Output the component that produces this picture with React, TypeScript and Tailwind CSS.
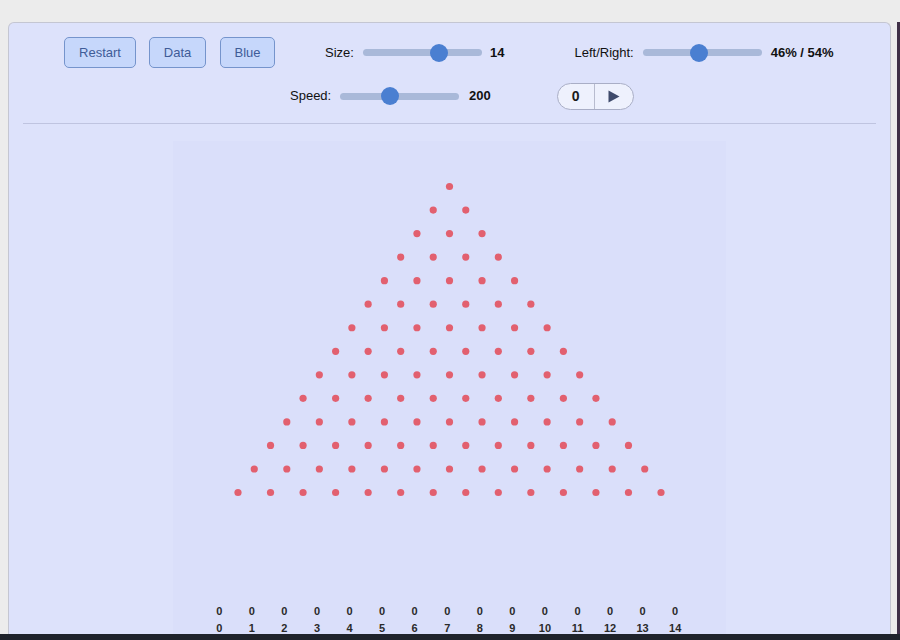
import React from "react";

const ROWS = 14;
const DX = 32.54;
const DY = 23.54;

function Slider({ pos }: { pos: number }) {
  return (
    <div className="relative w-[119px] h-[7px] rounded-full bg-[#a9b9d9]">
      <div
        className="absolute top-1/2 w-[18px] h-[18px] -mt-[9px] -ml-[9px] rounded-full bg-[#4a7fd1]"
        style={{ left: pos }}
      />
    </div>
  );
}

function Board() {
  const dots: React.ReactNode[] = [];
  for (let r = 0; r < ROWS; r++) {
    for (let c = 0; c <= r; c++) {
      const x = 276.5 + (c - r / 2) * DX;
      const y = 45.5 + r * DY;
      dots.push(<circle key={`${r}-${c}`} cx={x} cy={y} r={3.6} fill="#e2606f" />);
    }
  }
  return (
    <svg width={553} height={462} className="block">
      {dots}
    </svg>
  );
}

export default function App() {
  const nums = Array.from({ length: 15 }, (_, i) => i);
  return (
    <div
      className="w-[900px] h-[640px] bg-[#ececec] overflow-hidden flex flex-col"
      style={{ fontFamily: '"Liberation Sans", Arial, sans-serif' }}
    >
      <div className="h-[22px] shrink-0" />
      <div className="h-[612px] shrink-0 flex">
        <div className="w-[8px] shrink-0" />
        <div className="w-[883px] h-full shrink-0 rounded-t-[6px] border border-b-0 border-[#c4c6d2] bg-[#dde2fb] flex flex-col overflow-hidden">
          {/* Row 1 */}
          <div className="mt-[14px] h-[31px] flex items-center pl-[55px] text-[13px] text-[#111]">
            <button className="w-[72px] h-[31px] rounded-[5px] border border-[#7594cc] bg-[#c6d7fb] text-[#3f5c98] text-[13px]">
              Restart
            </button>
            <button className="ml-[13px] w-[57px] h-[31px] rounded-[5px] border border-[#7594cc] bg-[#c6d7fb] text-[#3f5c98] text-[13px]">
              Data
            </button>
            <button className="ml-[14px] w-[55px] h-[31px] rounded-[5px] border border-[#7594cc] bg-[#c6d7fb] text-[#3f5c98] text-[13px]">
              Blue
            </button>
            <span className="ml-[50px] w-[29px]">Size:</span>
            <div className="ml-[9px]">
              <Slider pos={76} />
            </div>
            <span className="ml-[8px] font-bold">14</span>
            <span className="ml-[70px]">Left/Right:</span>
            <div className="ml-[9px]">
              <Slider pos={56} />
            </div>
            <span className="ml-[9px] font-bold">46% / 54%</span>
          </div>
          {/* Row 2 */}
          <div className="mt-[15px] h-[26px] flex items-center pl-[281px] text-[13px] text-[#111]">
            <span className="w-[41px]">Speed:</span>
            <div className="ml-[9px]">
              <Slider pos={50} />
            </div>
            <span className="ml-[10px] font-bold">200</span>
            <div className="ml-[66px] w-[77px] h-[27px] rounded-full border border-[#a9aec6] bg-[#eef1fd] flex items-stretch overflow-hidden">
              <div className="w-[36px] flex items-center justify-center font-bold text-[14px] text-[#1a1a1a]">0</div>
              <div className="w-px bg-[#b8bccf]" />
              <div className="flex-1 flex items-center justify-center">
                <svg width="13" height="13" viewBox="0 0 13 13">
                  <path d="M1.5 0.5 L12.5 6.5 L1.5 12.5 Z" fill="#3e4a6b" />
                </svg>
              </div>
            </div>
          </div>
          {/* Divider */}
          <div className="mt-[14px] mx-[14px] h-px shrink-0 bg-[#bfc4e0]" />
          {/* Canvas */}
          <div className="mt-[17px] mx-auto w-[553px] flex-1 bg-[#dadffa]">
            <Board />
            <div className="ml-[30px] flex h-[17px] items-center text-[11px] font-bold text-[#2a2a2a]">
              {nums.map((n) => (
                <div key={n} className="w-[32.57px] text-center">0</div>
              ))}
            </div>
            <div className="ml-[30px] flex h-[17px] items-center text-[11px] font-bold text-[#2a2a2a]">
              {nums.map((n) => (
                <div key={n} className="w-[32.57px] text-center">{n}</div>
              ))}
            </div>
          </div>
        </div>
        <div className="w-[6px] shrink-0" />
        <div className="w-[3px] shrink-0 bg-[#3f2f47]" />
      </div>
      <div className="h-[6px] shrink-0 bg-[#1f232b]" />
    </div>
  );
}
